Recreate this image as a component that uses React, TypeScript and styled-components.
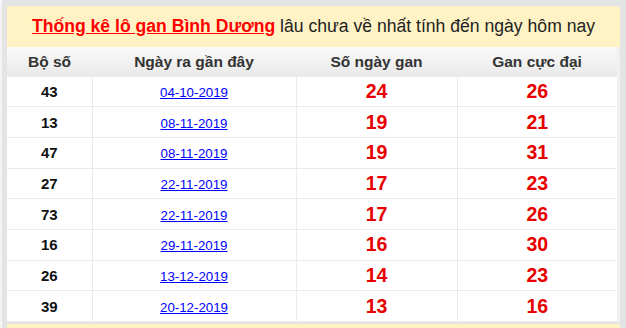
import React from "react";
import styled, { createGlobalStyle } from "styled-components";

const Global = createGlobalStyle`
  html, body { margin: 0; padding: 0; background: #e4e4e4; }
  body { font-family: Arial, "Liberation Sans", sans-serif; }
`;

const Page = styled.div`
  padding: 6px 0 0 5px;
  border-left: 2px solid #f4f4f4;
`;

const Card = styled.div`
  width: 613px;
  background: #f0f0f0;
`;

const Title = styled.div`
  height: 41px;
  background: #fff3c5;
  border-top-right-radius: 4px;
  display: flex;
  align-items: center;
  justify-content: center;
  font-size: 17.6px;
  color: #222;
  white-space: pre;
`;

const TitleLink = styled.a`
  color: #f00;
  font-weight: bold;
  text-decoration: underline;
`;

const Table = styled.table`
  width: 610px;
  border-collapse: collapse;
  background: #fff;
  table-layout: fixed;
`;

const Th = styled.th`
  height: 29.5px;
  padding: 0;
  font-size: 15.5px;
  font-weight: bold;
  color: #333;
  background: linear-gradient(#fafafa, #e9e9e9);
  text-align: center;
`;

const Td = styled.td<{ $kind?: "num" | "date" | "red" }>`
  height: 29.7px;
  padding: 0;
  text-align: center;
  border: 1px solid #ebebeb;
  border-top: none;
  font-weight: bold;
  font-size: ${(p) => (p.$kind === "red" ? "19.5px" : "15px")};
  color: ${(p) => (p.$kind === "red" ? "#e80000" : "#111")};
  &:first-child { border-left: none; }
  &:last-child { border-right: none; }
`;

const DateLink = styled.a`
  color: #00f;
  font-weight: normal;
  font-size: 13.3px;
  text-decoration: underline;
`;

const NextTitle = styled.div`
  margin-top: 2px;
  height: 10px;
  width: 613px;
  background: #fff3c5;
`;

const rows = [
  ["43", "04-10-2019", "24", "26"],
  ["13", "08-11-2019", "19", "21"],
  ["47", "08-11-2019", "19", "31"],
  ["27", "22-11-2019", "17", "23"],
  ["73", "22-11-2019", "17", "26"],
  ["16", "29-11-2019", "16", "30"],
  ["26", "13-12-2019", "14", "23"],
  ["39", "20-12-2019", "13", "16"],
];

export default function App() {
  return (
    <>
      <Global />
      <Page>
        <Card>
          <Title>
            <TitleLink href="#">Thống kê lô gan Bình Dương</TitleLink>
            {" lâu chưa về nhất tính đến ngày hôm nay"}
          </Title>
          <Table>
            <colgroup>
              <col style={{ width: 85 }} />
              <col style={{ width: 204 }} />
              <col style={{ width: 161 }} />
              <col style={{ width: 160 }} />
            </colgroup>
            <thead>
              <tr>
                <Th>Bộ số</Th>
                <Th>Ngày ra gần đây</Th>
                <Th>Số ngày gan</Th>
                <Th>Gan cực đại</Th>
              </tr>
            </thead>
            <tbody>
              {rows.map((r, i) => (
                <tr key={i}>
                  <Td $kind="num">{r[0]}</Td>
                  <Td $kind="date">
                    <DateLink href="#">{r[1]}</DateLink>
                  </Td>
                  <Td $kind="red">{r[2]}</Td>
                  <Td $kind="red">{r[3]}</Td>
                </tr>
              ))}
            </tbody>
          </Table>
        </Card>
        <NextTitle />
      </Page>
    </>
  );
}
